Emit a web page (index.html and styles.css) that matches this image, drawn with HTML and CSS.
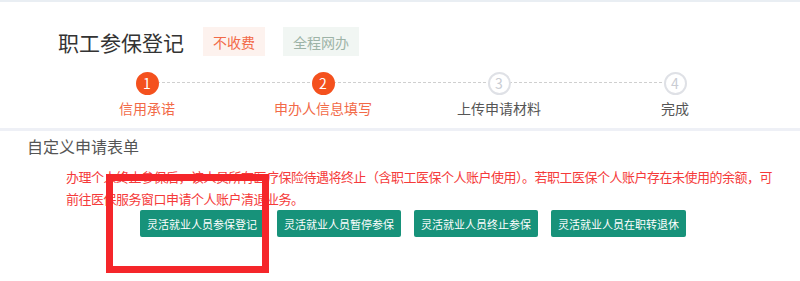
FILE: index.html
```html
<!DOCTYPE html>
<html lang="zh-CN">
<head>
  <meta charset="UTF-8">
  <title>职工参保登记</title>
  <link rel="stylesheet" href="styles.css">
</head>
<body>
  <header class="head">
    <h1 class="title">职工参保登记</h1>
    <span class="tag tag-free">不收费</span>
    <span class="tag tag-online">全程网办</span>
  </header>

  <ol class="steps">
    <li class="step done"><span class="dot">1</span><span class="label">信用承诺</span></li>
    <li class="step done"><span class="dot">2</span><span class="label">申办人信息填写</span></li>
    <li class="step"><span class="dot">3</span><span class="label">上传申请材料</span></li>
    <li class="step"><span class="dot">4</span><span class="label">完成</span></li>
  </ol>

  <section class="form">
    <h2 class="form-title">自定义申请表单</h2>
    <p class="notice">办理个人终止参保后，该人员所有医疗保险待遇将终止（含职工医保个人账户使用）。若职工医保个人账户存在未使用的余额，可<br>前往医保服务窗口申请个人账户清退业务。</p>
    <div class="actions">
      <button>灵活就业人员参保登记</button>
      <button>灵活就业人员暂停参保</button>
      <button>灵活就业人员终止参保</button>
      <button>灵活就业人员在职转退休</button>
    </div>
    <div class="mark"></div>
  </section>
</body>
</html>
```

FILE: styles.css
```css
body { margin: 0; background: #fff; font-family: "Noto Sans CJK SC", "Liberation Sans", sans-serif; color: #333; border-top: 2px solid #e9eef3; }
.head { display: flex; align-items: center; padding: 25px 0 0 58px; height: 29px; }
.title { margin: 0 19px 0 0; font-size: 21px; font-weight: normal; color: #333; }
.tag { display: inline-flex; align-items: center; height: 29px; padding: 0 10px; font-size: 14px; margin-right: 18px; }
.tag-free { background: #fdf2ee; color: #f26a48; }
.tag-online { background: #f1f6f3; color: #9db3a7; }

.steps { display: flex; list-style: none; margin: 0; padding: 16px 0 0 59px; height: 56px; }
.step { position: relative; width: 176px; display: flex; flex-direction: column; align-items: center; }
.step + .step::before { content: ""; position: absolute; top: 10px; right: 101px; width: 153px; border-top: 1px dashed #cfcfcf; }
.dot { width: 19px; height: 19px; border-radius: 50%; border: 2px solid #dfe1e6; background: #fff; color: #c9ccd3; font-size: 14px; line-height: 19px; text-align: center; position: relative; z-index: 1; }
.label { margin-top: 3px; font-size: 14px; color: #555; }
.done .dot { background: #f4511e; border-color: #f4511e; color: #fff; }
.done .label { color: #f26a48; }

.form { position: relative; border-top: 3px solid #eef0f6; padding: 3px 0 0 27px; height: 150px; }
.form-title { margin: 0; font-size: 16px; font-weight: normal; color: #555; line-height: 24px; }
.notice { margin: 8px 0 0 39px; font-size: 13px; line-height: 22px; color: #f53a3a; white-space: nowrap; letter-spacing: -0.5px; }
.actions { display: flex; gap: 13px; padding: 0 0 0 113px; }
.actions button { height: 27px; padding: 0 7px; border: none; border-radius: 2px; background: #17927a; color: #fff; font-family: inherit; font-size: 11px; }
.mark { position: absolute; left: 106px; top: 43px; width: 149px; height: 85px; border: 7px solid #f5262a; }
```
